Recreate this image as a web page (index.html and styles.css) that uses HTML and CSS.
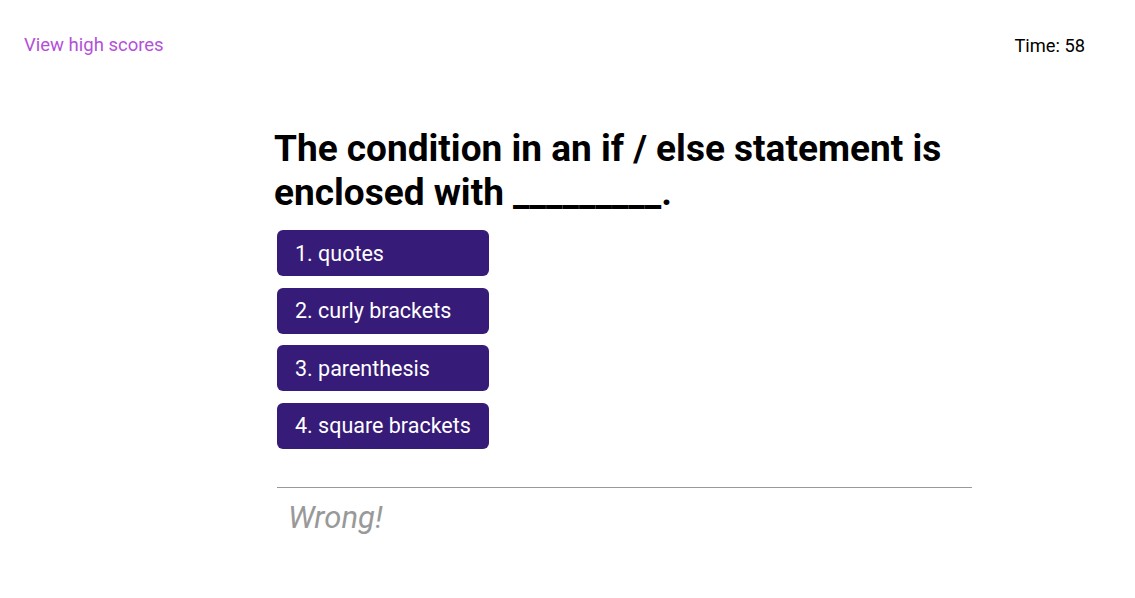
FILE: index.html
```html
<!DOCTYPE html>
<html>
<head>
<meta charset="utf-8">
<link rel="stylesheet" href="styles.css">
</head>
<body>
<header class="top">
  <a class="scores" href="#">View high scores</a>
  <div class="timer">Time: 58</div>
</header>
<main class="quiz">
  <h1 class="question">The condition in an if / else statement is enclosed with _________.</h1>
  <div class="choices">
    <button class="choice">1. quotes</button>
    <button class="choice">2. curly brackets</button>
    <button class="choice">3. parenthesis</button>
    <button class="choice">4. square brackets</button>
  </div>
  <div class="feedback">Wrong!</div>
</main>
</body>
</html>
```
FILE: styles.css
```css
html, body {
  margin: 0;
  padding: 0;
  background: #ffffff;
  font-family: Roboto, "Liberation Sans", sans-serif;
}
.top {
  display: flex;
  justify-content: space-between;
  align-items: center;
  padding: 33px 50px 0 24px;
  height: 24px;
  font-size: 18.5px;
}
.scores {
  color: #b450d8;
  text-decoration: none;
}
.timer {
  color: #000;
  font-size: 18.3px;
}
.quiz {
  margin-left: 274px;
  width: 698px;
  padding-top: 70px;
}
.question {
  margin: 0;
  font-size: 37px;
  line-height: 44px;
  font-weight: 700;
  color: #000;
}
.choices {
  display: flex;
  flex-direction: column;
  align-items: flex-start;
  gap: 11.5px;
  margin: 15px 0 0 3px;
}
.choice {
  height: 46px;
  width: 212px;
  padding: 0 0 0 18px;
  text-align: left;
  border: none;
  border-radius: 6px;
  background: #361b78;
  color: #fff;
  font-family: Roboto, "Liberation Sans", sans-serif;
  font-size: 21.5px;
}
.feedback {
  margin: 38px 0 0 3px;
  border-top: 1px solid #999;
  padding: 10px 0 0 11px;
  font-size: 31px;
  font-style: italic;
  color: #999;
  line-height: 40px;
}
```
